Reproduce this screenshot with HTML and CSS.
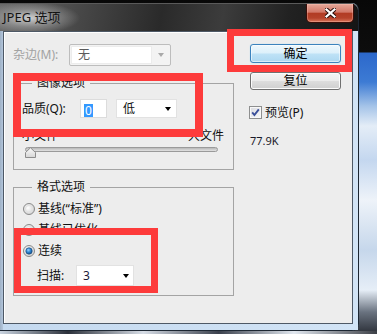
FILE: index.html
```html
<!DOCTYPE html>
<html lang="zh-CN">
<head>
<meta charset="utf-8">
<title>JPEG 选项</title>
<link rel="stylesheet" href="styles.css">
</head>
<body>
<div class="screen">
  <div class="window">
    <div class="titlebar">
      <span class="title">JPEG 选项</span>
      <div class="close">
        <svg width="11" height="10" viewBox="0 0 11 10"><path d="M1.5 1.5 L9.5 8.5 M9.5 1.5 L1.5 8.5" stroke="#2a0c08" stroke-width="4.2" stroke-linecap="square"/><path d="M1.5 1.5 L9.5 8.5 M9.5 1.5 L1.5 8.5" stroke="#ffffff" stroke-width="2.2" stroke-linecap="square"/></svg>
      </div>
    </div>
    <div class="frame">
      <div class="client">
        <div class="col-left">
          <div class="matte-row">
            <span class="lbl-disabled">杂边(M):</span>
            <div class="select select-disabled">
              <span class="select-val">无</span>
              <span class="select-btn"><i class="arrow arrow-gray"></i></span>
            </div>
          </div>
          <fieldset class="group group-image">
            <legend>图像选项</legend>
            <div class="quality-row">
              <span class="q-label">品质(Q):</span>
              <span class="text-input"><span class="sel-text">0</span></span>
              <div class="select select-quality"><span class="select-val">低</span><i class="arrow"></i></div>
            </div>
            <div class="scale-row"><span>小文件</span><span>大文件</span></div>
            <div class="slider">
              <div class="track"></div>
              <svg class="thumb" width="11" height="11" viewBox="0 0 11 11"><defs><linearGradient id="tg" x1="0" y1="0" x2="0" y2="1"><stop offset="0" stop-color="#fbfbfb"/><stop offset="1" stop-color="#d6d6d6"/></linearGradient></defs><path d="M0.5 10.5 L0.5 5.5 L5.5 0.8 L10.5 5.5 L10.5 10.5 Z" fill="url(#tg)" stroke="#8c8c8c"/></svg>
            </div>
          </fieldset>
          <fieldset class="group group-format">
            <legend>格式选项</legend>
            <div class="radio-row">
              <svg class="radio" width="12" height="12" viewBox="0 0 12 12"><defs><radialGradient id="r1" cx="0.4" cy="0.4" r="0.65"><stop offset="0" stop-color="#ffffff"/><stop offset="1" stop-color="#cdcdcd"/></radialGradient></defs><circle cx="6" cy="6" r="5.5" fill="url(#r1)" stroke="#8b8b8b"/><circle cx="6" cy="6" r="3.6" fill="none" stroke="#e2e2e2"/></svg>
              <span>基线(“标准”)</span>
            </div>
            <div class="radio-row">
              <svg class="radio" width="12" height="12" viewBox="0 0 12 12"><defs><radialGradient id="r2" cx="0.4" cy="0.4" r="0.65"><stop offset="0" stop-color="#ffffff"/><stop offset="1" stop-color="#cdcdcd"/></radialGradient></defs><circle cx="6" cy="6" r="5.5" fill="url(#r2)" stroke="#8b8b8b"/><circle cx="6" cy="6" r="3.6" fill="none" stroke="#e2e2e2"/></svg>
              <span>基线已优化</span>
            </div>
            <div class="radio-row">
              <svg class="radio" width="12" height="12" viewBox="0 0 12 12"><defs><radialGradient id="r3" cx="0.4" cy="0.4" r="0.65"><stop offset="0" stop-color="#ffffff"/><stop offset="1" stop-color="#d0d0d0"/></radialGradient><radialGradient id="r3d" cx="0.4" cy="0.35" r="0.7"><stop offset="0" stop-color="#9ad3ff"/><stop offset="0.5" stop-color="#2d86d2"/><stop offset="1" stop-color="#124a86"/></radialGradient></defs><circle cx="6" cy="6" r="5.5" fill="url(#r3)" stroke="#8b8b8b"/><circle cx="6" cy="6" r="3.2" fill="url(#r3d)" stroke="#1d4e80" stroke-width="0.7"/></svg>
              <span>连续</span>
            </div>
            <div class="scan-row">
              <span class="scan-label">扫描:</span>
              <div class="select select-scan"><span class="select-val num">3</span><i class="arrow"></i></div>
            </div>
          </fieldset>
        </div>
        <div class="col-right">
          <div class="btn btn-ok">确定</div>
          <div class="btn btn-reset">复位</div>
          <div class="check-row">
            <svg class="checkbox" width="13" height="13" viewBox="0 0 13 13"><defs><linearGradient id="cg" x1="0" y1="0" x2="1" y2="1"><stop offset="0" stop-color="#dcdde2"/><stop offset="1" stop-color="#f6f6f8"/></linearGradient></defs><rect x="0.5" y="0.5" width="12" height="12" fill="#f8f8f8" stroke="#8e8f8f"/><rect x="2" y="2" width="9" height="9" fill="url(#cg)"/><path d="M3.2 6.4 L5.4 9 L9.8 3.4" stroke="#3a4f9a" stroke-width="1.9" fill="none"/></svg>
            <span class="check-label">预览(P)</span>
          </div>
          <div class="size">77.9K</div>
        </div>
        <div class="mark m1"></div>
        <div class="mark m2"></div>
        <div class="mark m3"></div>
      </div>
    </div>
  </div>
</div>
</body>
</html>
```
FILE: styles.css
```css
* { box-sizing: border-box; }
html, body { margin: 0; padding: 0; }
body {
  width: 377px;
  height: 334px;
  overflow: hidden;
  font-family: "Noto Sans", "Noto Sans CJK SC", sans-serif;
  font-size: 12px;
  color: #111;
}
.screen {
  width: 377px;
  height: 334px;
  padding-top: 3px;
  background:
    linear-gradient(to right, #c9d3df 0, #2b303a 18%, #d7dde6 38%, #3a404c 58%, #e1e7ef 78%, #3c3f46 100%) bottom / 100% 3px no-repeat,
    linear-gradient(to bottom, #080808 0, #0d0d0d 52px, #2c68cb 53px, #3d7bd4 82px, #a4c3e8 106px, #e4edf7 126px, #c4d7ef 160px, #eef3f9 200px, #c6d7eb 250px, #e6eef7 290px, #6a7380 312px, #2a2e36 334px);
}
.window {
  width: 359px;
  height: 328px;
  display: flex;
  flex-direction: column;
  border-right: 1px solid #1d2733;
  border-bottom: 1px solid #1d2733;
  border-radius: 0 7px 7px 0;
  background: #c4d9ef;
}
.titlebar {
  height: 28px;
  display: flex;
  align-items: flex-start;
  border-radius: 0 7px 0 0;
  background:
    radial-gradient(ellipse 50px 16px at 30px 14px, rgba(225,225,225,0.85) 0%, rgba(180,180,180,0.45) 55%, rgba(160,160,160,0) 100%),
    linear-gradient(100deg, #6a6a6a 0%, #484848 22%, #2a2a2a 45%, #3c3c3c 62%, #222222 80%, #151515 100%);
  border-top: 1px solid #5a5a5a;
}
.title {
  margin: 5px 0 0 3px;
  font-size: 13px;
  line-height: 16px;
  color: #141414;
}
.close {
  width: 48px;
  height: 19px;
  margin: 0 4px 0 auto;
  border: 1px solid #3a0d07;
  border-top: none;
  border-radius: 0 0 5px 5px;
  display: flex;
  align-items: center;
  justify-content: center;
  background: linear-gradient(#e6a99a 0%, #d27868 45%, #b23c24 52%, #b5432b 78%, #d9745a 100%);
  box-shadow: inset 0 0 0 1px rgba(255,200,190,0.35);
}
.frame {
  flex: 1;
  padding: 0 5px 6px 3px;
  background: linear-gradient(to right, #9fb1c6 0, #b3c6dc 3px, #c4d9ef 3px, #d2e4f6 100%);
}
.client {
  position: relative;
  height: 100%;
  border: 1px solid #4e5966;
  box-shadow: inset 1px 1px 0 #ffffff;
  background: #ededed;
  padding: 12px 0 0 9px;
  display: grid;
  grid-template-columns: 221px 91px;
  column-gap: 16px;
  align-items: start;
}
.col-left { display: flex; flex-direction: column; }
.matte-row { display: flex; align-items: center; height: 22px; }
.lbl-disabled { width: 56px; color: #a2a2a2; line-height: 14px; }
.select {
  display: flex;
  align-items: center;
  background: #ffffff;
  border: 1px solid #e2e2e2;
}
.select-val { line-height: 14px; }
.select-disabled {
  width: 102px;
  height: 22px;
  border: 1px solid #bdbdbd;
  border-radius: 2px;
  background: #f3f3f3;
  padding: 1px;
}
.select-disabled .select-val {
  flex: 1;
  height: 100%;
  background: #ffffff;
  border: 1px solid #ececec;
  padding-left: 6px;
  display: flex;
  align-items: center;
  color: #5a5a5a;
}
.select-btn { width: 17px; display: flex; justify-content: center; }
.arrow {
  display: block;
  width: 0;
  height: 0;
  border-left: 3.5px solid transparent;
  border-right: 3.5px solid transparent;
  border-top: 4px solid #000;
}
.arrow-gray { border-top-color: #a9a9a9; }
.group {
  margin: 10px 0 0;
  border: 1px solid #a4a4a4;
  min-width: 0;
}
.group legend {
  margin-left: 10px;
  padding: 0 5px;
  line-height: 14px;
  font-size: 12px;
}
.group-image { padding: 9px 9px 11px 8px; }
.quality-row { display: flex; align-items: center; height: 19px; }
.q-label { width: 58px; line-height: 14px; }
.text-input {
  width: 27px;
  height: 19px;
  background: #fff;
  border: 1px solid #dcdcdc;
  padding: 2px 0 0 3px;
}
.sel-text {
  display: inline-block;
  background: #3399ff;
  color: #fff;
  line-height: 13px;
  padding: 0 1px;
}
.select-quality {
  width: 61px;
  height: 19px;
  margin-left: 9px;
  padding: 0 5px 0 6px;
  justify-content: space-between;
}
.scale-row {
  display: flex;
  justify-content: space-between;
  margin-top: 10px;
  line-height: 15px;
}
.slider { position: relative; height: 11px; margin: 0 6px 0 3px; }
.track {
  margin-top: 4px;
  height: 5px;
  border-radius: 3px;
  border: 1px solid #9a9a9a;
  background: linear-gradient(#b8b8b8, #e2e2e2);
}
.thumb { position: absolute; left: 0; top: 0; }
.group-format { padding: 4px 9px 9px 8px; }
.radio-row { display: flex; align-items: center; height: 21px; line-height: 14px; }
.radio { margin: 0 3px 0 1px; flex: none; }
.scan-row { display: flex; align-items: center; margin-top: 4px; padding-left: 15px; }
.scan-label { width: 39px; line-height: 14px; }
.select-scan {
  width: 58px;
  height: 21px;
  padding: 0 4px 0 6px;
  justify-content: space-between;
}
.num { color: #1a1a3a; }
.col-right { display: flex; flex-direction: column; align-items: flex-start; }
.btn {
  width: 91px;
  border-radius: 3px;
  display: flex;
  align-items: center;
  justify-content: center;
  line-height: 14px;
  color: #000;
}
.btn-ok {
  height: 19px;
  border: 1px solid #3c83bd;
  background: linear-gradient(#eef8fd 0%, #dcf0fa 48%, #bfe2f6 52%, #acd8f1 100%);
  box-shadow: inset 0 0 0 1px rgba(255,255,255,0.55), 0 0 1px #8fd0f5;
}
.btn-reset {
  height: 18px;
  margin-top: 9px;
  border: 1px solid #707070;
  background: linear-gradient(#f3f3f3 0%, #ebebeb 48%, #dddddd 52%, #cfcfcf 100%);
  box-shadow: inset 0 0 0 1px #fbfbfb;
}
.check-row { display: flex; align-items: center; margin: 16px 0 0 -1px; height: 13px; }
.check-label { margin-left: 3px; line-height: 14px; }
.size { margin-top: 15px; font-size: 11px; line-height: 13px; color: #1a1a2a; }
.mark { position: absolute; border: 7px solid #fd3b3b; }
.m1 { left: 223px; top: -3px; width: 125px; height: 43px; }
.m2 { left: 9px; top: 41px; width: 190px; height: 64px; border-width: 8px; }
.m3 { left: 10px; top: 196px; width: 144px; height: 65px; }
```
